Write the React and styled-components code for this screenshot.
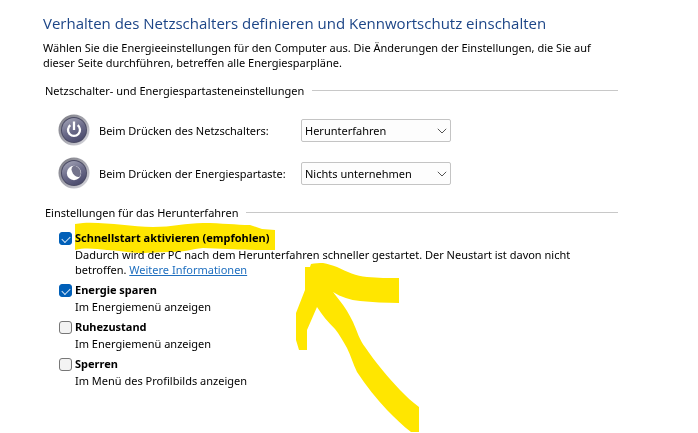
import styled, { createGlobalStyle } from "styled-components";

const powerButtons = [
  {
    id: "power",
    icon: "power",
    label: "Beim Drücken des Netzschalters:",
    value: "Herunterfahren",
  },
  {
    id: "sleep",
    icon: "sleep",
    label: "Beim Drücken der Energiespartaste:",
    value: "Nichts unternehmen",
  },
];

const actions = [
  "Nichts unternehmen",
  "Energie sparen",
  "Ruhezustand",
  "Herunterfahren",
];

const shutdownOptions = [
  {
    id: "faststart",
    title: "Schnellstart aktivieren (empfohlen)",
    text: "Dadurch wird der PC nach dem Herunterfahren schneller gestartet. Der Neustart ist davon nicht betroffen. ",
    link: "Weitere Informationen",
    checked: true,
  },
  {
    id: "sleepmenu",
    title: "Energie sparen",
    text: "Im Energiemenü anzeigen",
    checked: true,
  },
  {
    id: "hibernate",
    title: "Ruhezustand",
    text: "Im Energiemenü anzeigen",
    checked: false,
  },
  {
    id: "lock",
    title: "Sperren",
    text: "Im Menü des Profilbilds anzeigen",
    checked: false,
  },
];

const ButtonIcon = ({ type }) => (
  <Icon viewBox="0 0 32 32" aria-hidden="true">
    <defs>
      <linearGradient id={`${type}-rim`} x1="0" y1="0" x2="1" y2="1">
        <stop offset="0" stopColor="#77777f" />
        <stop offset="0.5" stopColor="#a5a5ae" />
        <stop offset="1" stopColor="#dcdce2" />
      </linearGradient>
      <linearGradient id={`${type}-face`} x1="0.2" y1="0" x2="0.7" y2="1">
        <stop offset="0" stopColor="#a0a1b4" />
        <stop offset="0.5" stopColor="#6c6c8a" />
        <stop offset="1" stopColor="#4a4a6c" />
      </linearGradient>
    </defs>
    <circle cx="16" cy="16" r="15.5" fill={`url(#${type}-rim)`} />
    <circle cx="16" cy="16" r="13" fill="#4a4a64" />
    <circle cx="16" cy="16" r="12" fill={`url(#${type}-face)`} />
    {type === "power" ? (
      <g fill="none" stroke="#fff" strokeWidth="2.3">
        <path d="M12.3 11.2A6 6 0 1 0 19.7 11.2" />
        <path d="M16 7.5V16" />
      </g>
    ) : (
      <g>
        <circle cx="16" cy="16" r="7.2" fill="#fff" />
        <ellipse
          cx="18.2"
          cy="14.4"
          rx="3.9"
          ry="6.2"
          fill="#74748c"
          transform="rotate(-32 18.2 14.4)"
        />
      </g>
    )}
  </Icon>
);

const App = () => {
  return (
    <>
      <GlobalStyle />
      <Page>
        <Title>
          Verhalten des Netzschalters definieren und Kennwortschutz einschalten
        </Title>
        <Intro>
          Wählen Sie die Energieeinstellungen für den Computer aus. Die
          Änderungen der Einstellungen, die Sie auf dieser Seite durchführen,
          betreffen alle Energiesparpläne.
        </Intro>

        <SectionTitle>Netzschalter- und Energiespartasteneinstellungen</SectionTitle>
        <ButtonList>
          {powerButtons.map((item) => (
            <ButtonRow key={item.id}>
              <ButtonIcon type={item.icon} />
              <ButtonLabel htmlFor={item.id}>{item.label}</ButtonLabel>
              <SelectBox>
                <Select id={item.id} defaultValue={item.value}>
                  {actions.map((action) => (
                    <option key={action}>{action}</option>
                  ))}
                </Select>
                <Chevron viewBox="0 0 10 6" aria-hidden="true">
                  <path d="M0.8 0.8L5 5L9.2 0.8" />
                </Chevron>
              </SelectBox>
            </ButtonRow>
          ))}
        </ButtonList>

        <SectionTitle>Einstellungen für das Herunterfahren</SectionTitle>
        <OptionList>
          {shutdownOptions.map((option) => (
            <Option key={option.id}>
              <Checkbox
                type="checkbox"
                id={option.id}
                defaultChecked={option.checked}
              />
              <OptionTitle htmlFor={option.id}>{option.title}</OptionTitle>
              <OptionText>
                {option.text}
                {option.link && <Link href="#info">{option.link}</Link>}
              </OptionText>
            </Option>
          ))}
          <Marker viewBox="59 229 361 204" aria-hidden="true">
            <path d="M75 224L83 223C108 222 130 227 153 227C172 227 186 223 203 223C222 223 236 225 250 225L262 229L275 230V250C262 250 244 250 227 249L203 248C192 249 184 252 173 252C160 252 152 253 140 253C128 253 118 250 107 250C96 249 86 247 75 250Z" />
            <path d="M305 267H310L311 264C315 263 319 263 323 263C328 264 332 265 337 267C347 272 356 276 367 277C378 278 388 278 399 278V303C386 303 372 302 360 301C350 300 341 297 333 292L340 301C345 307 349 314 353 322C357 331 360 341 365 347C375 362 388 377 400 390C406 396 412 402 419 407V432H411C403 426 395 418 387 410C377 399 366 386 357 372C353 364 351 356 347 348C343 341 339 334 335 329C328 322 322 315 317 307L307 330V350H299L296 340V313L305 290Z" />
          </Marker>
        </OptionList>
      </Page>
    </>
  );
};

const GlobalStyle = createGlobalStyle`
  * {
    box-sizing: border-box;
  }

  body {
    margin: 0;
    background: #fff;
    color: #000;
    font-family: "Noto Sans", "Open Sans", sans-serif;
    font-size: 11px;
    line-height: 15px;
  }
`;

const Page = styled.main`
  min-height: 100vh;
  padding: 12px 80px 0 43px;
  background: #fff;
`;

const Title = styled.h1`
  margin: 0;
  color: #1c4587;
  font-family: "Open Sans", sans-serif;
  font-size: 15px;
  font-weight: 400;
  line-height: 22px;
`;

const Intro = styled.p`
  margin: 6px 0 0;
`;

const SectionTitle = styled.h2`
  display: flex;
  align-items: center;
  gap: 8px;
  margin: 13px 0 0 2px;
  font-size: 11px;
  font-weight: 400;

  &::after {
    content: "";
    flex: 1;
    height: 1px;
    background: #c8c8c8;
  }
`;

const ButtonList = styled.div`
  display: flex;
  flex-direction: column;
  gap: 11px;
  margin: 16px 0 0 15px;
  padding-bottom: 3px;
`;

const ButtonRow = styled.div`
  display: grid;
  grid-template-columns: 32px 193px 150px;
  column-gap: 9px;
  align-items: center;
`;

const Icon = styled.svg`
  width: 32px;
  height: 32px;
`;

const ButtonLabel = styled.label`
  white-space: nowrap;
`;

const SelectBox = styled.div`
  position: relative;
`;

const Select = styled.select`
  appearance: none;
  display: block;
  width: 100%;
  height: 23px;
  padding: 0 20px 0 3px;
  border: 1px solid #c4c4c4;
  border-radius: 2px;
  background: #fdfdfd;
  color: #000;
  font: inherit;
`;

const Chevron = styled.svg`
  position: absolute;
  top: 9px;
  right: 4px;
  width: 10px;
  height: 6px;
  fill: none;
  stroke: #555;
  pointer-events: none;
`;

const OptionList = styled.div`
  position: relative;
  display: flex;
  flex-direction: column;
  gap: 4px;
  margin: 9px 0 0 16px;
`;

const Option = styled.div`
  display: grid;
  grid-template-columns: 13px 1fr;
  column-gap: 3px;
  align-items: center;
`;

const Checkbox = styled.input`
  appearance: none;
  width: 13px;
  height: 13px;
  margin: 0;
  border: 1px solid #777;
  border-radius: 3px;
  background: #f3f3f3;

  &:checked {
    border-color: #005fb8;
    background: #005fb8;
  }

  &:checked::before {
    content: "";
    display: block;
    width: 7px;
    height: 4px;
    margin: 3px 0 0 2px;
    border: solid #d5e6f6;
    border-width: 0 0 1px 1px;
    transform: rotate(-45deg);
  }
`;

const OptionTitle = styled.label`
  justify-self: start;
  font-weight: 700;
  line-height: 18px;
`;

const OptionText = styled.p`
  grid-column: 2;
  margin: 0;
`;

const Link = styled.a`
  color: #1f6fbf;
`;

/* highlighter strokes, multiplied so the text stays readable */
const Marker = styled.svg`
  position: absolute;
  top: 0;
  left: 0;
  width: 361px;
  height: 204px;
  overflow: visible;
  fill: #ffe600;
  mix-blend-mode: multiply;
  pointer-events: none;
`;

export default App;
